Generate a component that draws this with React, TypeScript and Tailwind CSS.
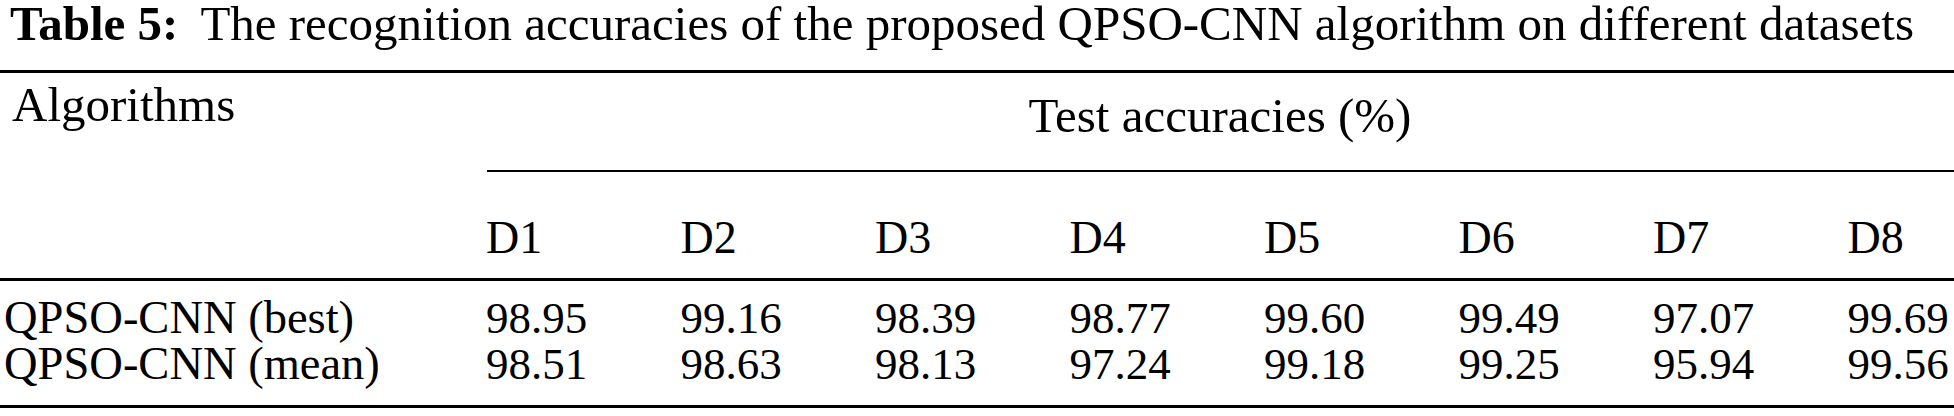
import React from 'react';

const datasets = ['D1', 'D2', 'D3', 'D4', 'D5', 'D6', 'D7', 'D8'];

const rows = [
  { name: 'QPSO-CNN (best)', values: ['98.95', '99.16', '98.39', '98.77', '99.60', '99.49', '97.07', '99.69'] },
  { name: 'QPSO-CNN (mean)', values: ['98.51', '98.63', '98.13', '97.24', '99.18', '99.25', '95.94', '99.56'] },
];

export default function App() {
  return (
    <div className="w-[1954px] h-[416px] bg-white text-black font-['Liberation_Serif','Times_New_Roman',serif] text-[49px] whitespace-nowrap overflow-hidden">
      <div className="h-[70px] pl-[10px] pt-[2px] leading-[44px]">
        <span className="font-bold">Table 5:</span>
        <span className="ml-[22px]">The recognition accuracies of the proposed QPSO-CNN algorithm on different datasets</span>
      </div>

      <div className="border-t-[3px] border-black">
        <div className="grid grid-cols-[486px_1fr] h-[205px]">
          <div className="pl-[12px] pt-[8px] leading-[48px]">Algorithms</div>
          <div className="flex flex-col">
            <div className="pt-[19px] leading-[48px] text-center">Test accuracies (%)</div>
            <div className="mt-[30px] ml-px border-t-2 border-black" />
            <div className="grid grid-cols-[repeat(7,194.5px)_1fr] mt-[42px] leading-[48px] text-[46px]">
              {datasets.map(d => (
                <div key={d}>{d}</div>
              ))}
            </div>
          </div>
        </div>
      </div>

      <div className="border-t-[3px] border-black pt-[14px] pb-[18px]">
        {rows.map(r => (
          <div key={r.name} className="grid grid-cols-[486px_repeat(7,194.5px)_1fr] leading-[46px]">
            <div className="pl-[4px] text-[46.5px]">{r.name}</div>
            {r.values.map((v, i) => (
              <div key={i} className="text-[45px]">{v}</div>
            ))}
          </div>
        ))}
      </div>
      <div className="border-t-[3px] border-black" />
    </div>
  );
}
